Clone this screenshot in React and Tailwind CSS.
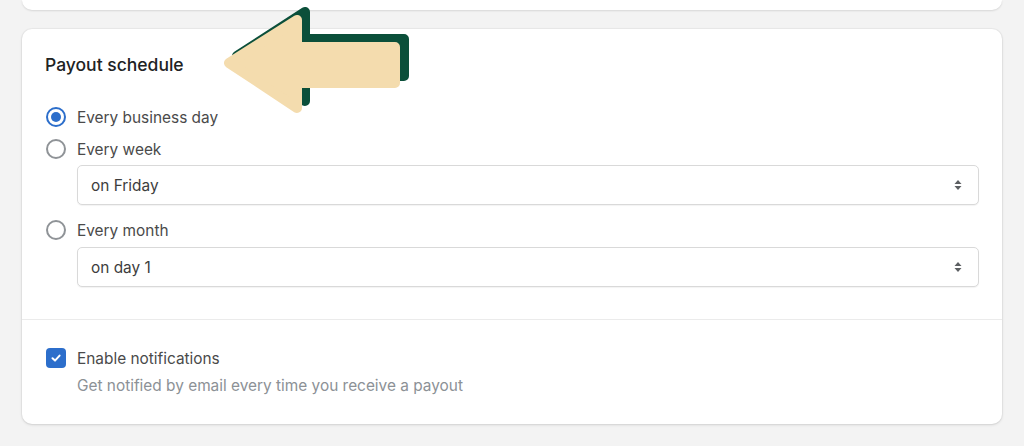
import { useState } from 'react'

const font = { fontFamily: 'Inter, "Noto Sans", sans-serif' }

function Radio({ checked, label, onSelect }) {
  return (
    <label className="flex items-center gap-[11px] h-6 cursor-pointer" onClick={onSelect}>
      {checked ? (
        <span className="ml-[1px] w-5 h-5 rounded-full border-2 border-[#2c6ecb] flex items-center justify-center bg-white">
          <span className="w-[10px] h-[10px] rounded-full bg-[#2c6ecb]" />
        </span>
      ) : (
        <span className="ml-[1px] w-5 h-5 rounded-full border-2 border-[#8f9397] bg-white" />
      )}
      <span className="text-[15.4px] leading-6 pt-[2px] text-[#4a4a4a]">{label}</span>
    </label>
  )
}

function Chevrons() {
  return (
    <svg width="10" height="14" viewBox="0 0 10 14" className="text-[#5c5f62]">
      <path d="M5 2 L8.5 6 H1.5 Z" fill="currentColor" />
      <path d="M5 12 L8.5 8 H1.5 Z" fill="currentColor" />
    </svg>
  )
}

function FakeSelect({ value }) {
  return (
    <div className="ml-8 h-10 flex items-center justify-between px-[13px] pr-[15px] border border-[#d9d9d9] rounded-[5px] bg-white shadow-[0_1px_1px_rgba(0,0,0,0.05)]">
      <span className="text-[15.4px] pt-[2px] text-[#3d3d3d]">{value}</span>
      <Chevrons />
    </div>
  )
}

function Arrow() {
  return (
    <svg width="210" height="125" viewBox="0 0 210 125" className="absolute left-[215px] top-0 pointer-events-none">
      <polygon
        points="22,56 90,12 90,39 189,39 189,76 90,76 90,101"
        fill="#0b4f3a"
        stroke="#0b4f3a"
        strokeWidth="10"
        strokeLinejoin="round"
      />
      <polygon
        points="14,63 82,20 82,47 180,47 180,83 82,83 82,108"
        fill="#f4dcae"
        stroke="#f4dcae"
        strokeWidth="10"
        strokeLinejoin="round"
      />
    </svg>
  )
}

export default function App() {
  const [freq, setFreq] = useState('daily')
  const [notify, setNotify] = useState(true)

  return (
    <div className="relative min-h-[446px] bg-[#f3f3f3] px-[22px] pb-6" style={font}>
      {/* card above, cut off by the viewport */}
      <div className="h-[10px] bg-white rounded-b-[10px] shadow-[0_1px_2px_rgba(0,0,0,0.12)]" />

      <div className="mt-[19px] bg-white rounded-[10px] shadow-[0_0_0_1px_rgba(0,0,0,0.03),0_1px_3px_rgba(0,0,0,0.12)]">
        <div className="px-[23px] pt-6 pb-8">
          <h2 className="text-[17.5px] leading-6 font-medium text-[#202223]">Payout schedule</h2>

          <div className="mt-7 flex flex-col">
            <Radio checked={freq === 'daily'} label="Every business day" onSelect={() => setFreq('daily')} />
            <div className="mt-2">
              <Radio checked={freq === 'weekly'} label="Every week" onSelect={() => setFreq('weekly')} />
            </div>
            <div className="mt-1">
              <FakeSelect value="on Friday" />
            </div>
            <div className="mt-[13px]">
              <Radio checked={freq === 'monthly'} label="Every month" onSelect={() => setFreq('monthly')} />
            </div>
            <div className="mt-[5px]">
              <FakeSelect value="on day 1" />
            </div>
          </div>
        </div>

        <div className="border-t border-[#ebebeb] px-[23px] pt-[26px] pb-7">
          <label className="flex items-center gap-[11px] h-6 cursor-pointer" onClick={() => setNotify(n => !n)}>
            <span className={`ml-[1px] w-5 h-5 rounded-[4px] flex items-center justify-center ${notify ? 'bg-[#2c6ecb]' : 'border-[1.5px] border-[#8c9196] bg-white'}`}>
              {notify && (
                <svg width="12" height="12" viewBox="0 0 12 12">
                  <path d="M2.5 6.3 L5 8.6 L9.6 3.6" fill="none" stroke="white" strokeWidth="2" strokeLinecap="round" strokeLinejoin="round" />
                </svg>
              )}
            </span>
            <span className="text-[15.4px] pt-[2px] text-[#4a4a4a]">Enable notifications</span>
          </label>
          <p className="mt-[6px] ml-8 text-[15.4px] leading-5 text-[#8c9196]">
            Get notified by email every time you receive a payout
          </p>
        </div>
      </div>

      <Arrow />
    </div>
  )
}
